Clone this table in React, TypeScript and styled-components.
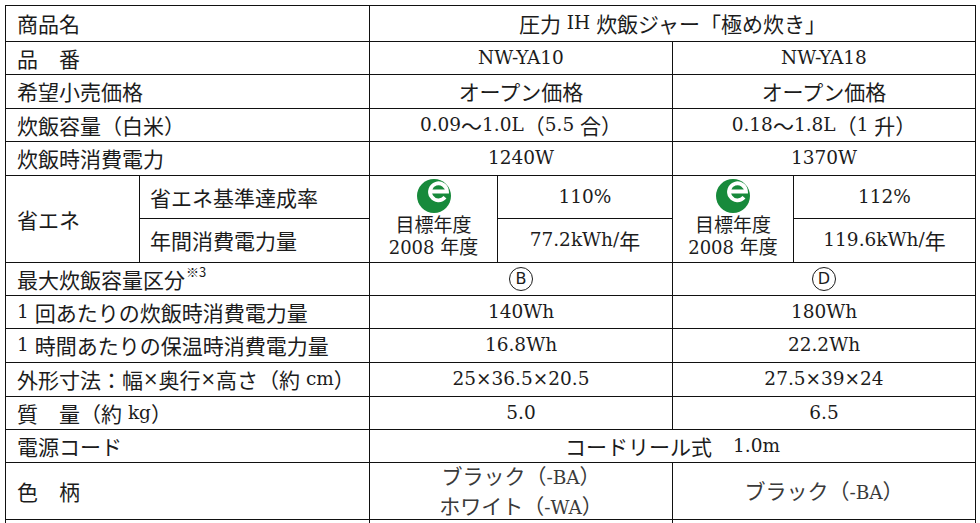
import React from "react";
import styled, { createGlobalStyle } from "styled-components";

const GlobalStyle = createGlobalStyle`
  html, body {
    margin: 0;
    padding: 0;
    background: #ffffff;
    overflow: hidden;
  }
  body {
    height: 523px;
  }
`;

// grid lines sit at x = 5,139,369,497,672,793,975
// and y = 5,41,74,108,141,175,218,262,295,328,362,396,429,462,519
const Sheet = styled.div`
  display: grid;
  grid-template-columns: 133px 229px 127px 174px 120px 181px;
  grid-template-rows: 35px 32px 33px 32px 33px 42px 43px 32px 32px 33px 33px 32px 32px 56px 30px;
  gap: 1px;
  padding: 1px;
  width: max-content;
  margin: 5px 0 0 5px;
  background: #111;
  font-family: "Noto Sans CJK JP", sans-serif;
  font-size: 21px;
  color: #1c1c1c;
`;

const Cell = styled.div<{ $col: string; $row?: string; $center?: boolean; $pad?: number }>`
  grid-column: ${(p) => p.$col};
  grid-row: ${(p) => p.$row ?? "auto"};
  background: #ffffff;
  display: flex;
  align-items: center;
  justify-content: ${(p) => (p.$center ? "center" : "flex-start")};
  padding-left: ${(p) => (p.$center ? 0 : p.$pad ?? 11)}px;
  white-space: pre;
  line-height: 1;
`;

// latin runs are set in a wide serif, like Century in the original sheet
const Latin = styled.span`
  font-family: "DejaVu Serif", "Liberation Serif", serif;
  font-size: 18.5px;
`;

const Sup = styled.span`
  font-size: 13px;
  position: relative;
  top: -8px;
  margin-left: 1px;
`;

const Circled = styled.span`
  flex: 0 0 24px;
  box-sizing: border-box;
  display: flex;
  align-items: center;
  justify-content: center;
  width: 24px;
  height: 24px;
  border: 1.5px solid #1c1c1c;
  border-radius: 50%;
  font-family: "DejaVu Sans", sans-serif;
  font-size: 16px;
  line-height: 1;
`;

const MarkCell = styled(Cell)`
  flex-direction: column;
  justify-content: flex-start;
  padding-top: 3px;
`;

const MarkText = styled.div`
  line-height: 22px;
  text-align: center;
  font-size: 19px;
  ${Latin} {
    font-size: 18px;
  }
`;

const Lines = styled.div`
  display: flex;
  flex-direction: column;
  align-items: center;
  gap: 7px;
  color: #3a3a3a;
`;

function Txt({ children }: { children: string }) {
  const parts = children.split(/( ?[A-Za-z0-9.%/×\-]+ ?)/);
  return (
    <>
      {parts.map((p, i) => (i % 2 === 1 ? <Latin key={i}>{p}</Latin> : p))}
    </>
  );
}

function EcoMark() {
  return (
    <svg width="34" height="34" viewBox="0 0 34 34">
      <circle cx="17" cy="17" r="17" fill="#178a3b" />
      <path
        d="M14.5 12.5 H30 A8.5 8.5 0 1 0 28 18.3"
        fill="none"
        stroke="#ffffff"
        strokeWidth="3.8"
      />
    </svg>
  );
}

type Row = { label: React.ReactNode; a: React.ReactNode; b: React.ReactNode; row: number };

const t = (s: string) => <Txt>{s}</Txt>;

const simpleRows: Row[] = [
  { row: 2, label: "品　番", a: t("NW-YA10"), b: t("NW-YA18") },
  { row: 3, label: "希望小売価格", a: "オープン価格", b: "オープン価格" },
  { row: 4, label: "炊飯容量（白米）", a: t("0.09～1.0L（5.5 合）"), b: t("0.18～1.8L（1 升）") },
  { row: 5, label: "炊飯時消費電力", a: t("1240W"), b: t("1370W") },
  {
    row: 8,
    label: (
      <>
        最大炊飯容量区分<Sup>※3</Sup>
      </>
    ),
    a: <Circled>B</Circled>,
    b: <Circled>D</Circled>,
  },
  { row: 9, label: t("1 回あたりの炊飯時消費電力量"), a: t("140Wh"), b: t("180Wh") },
  { row: 10, label: t("1 時間あたりの保温時消費電力量"), a: t("16.8Wh"), b: t("22.2Wh") },
  { row: 11, label: t("外形寸法：幅×奥行×高さ（約 cm）"), a: t("25×36.5×20.5"), b: t("27.5×39×24") },
  { row: 12, label: t("質　量（約 kg）"), a: t("5.0"), b: t("6.5") },
];

export default function App() {
  return (
    <>
      <GlobalStyle />
      <Sheet>
        <Cell $col="1 / 3" $row="1">商品名</Cell>
        <Cell $col="3 / 7" $row="1" $center>
          {t("圧力 IH 炊飯ジャー「極め炊き」")}
        </Cell>

        {simpleRows.map((r) => (
          <React.Fragment key={r.row}>
            <Cell $col="1 / 3" $row={String(r.row)}>{r.label}</Cell>
            <Cell $col="3 / 5" $row={String(r.row)} $center>{r.a}</Cell>
            <Cell $col="5 / 7" $row={String(r.row)} $center>{r.b}</Cell>
          </React.Fragment>
        ))}

        <Cell $col="1" $row="6 / 8">省エネ</Cell>
        <Cell $col="2" $row="6" $pad={10}>省エネ基準達成率</Cell>
        <Cell $col="2" $row="7" $pad={10}>年間消費電力量</Cell>
        <MarkCell $col="3" $row="6 / 8" $center>
          <EcoMark />
          <MarkText>
            目標年度
            <br />
            {t("2008 年度")}
          </MarkText>
        </MarkCell>
        <Cell $col="4" $row="6" $center>{t("110%")}</Cell>
        <Cell $col="4" $row="7" $center>{t("77.2kWh/年")}</Cell>
        <MarkCell $col="5" $row="6 / 8" $center>
          <EcoMark />
          <MarkText>
            目標年度
            <br />
            {t("2008 年度")}
          </MarkText>
        </MarkCell>
        <Cell $col="6" $row="6" $center>{t("112%")}</Cell>
        <Cell $col="6" $row="7" $center>{t("119.6kWh/年")}</Cell>

        <Cell $col="1 / 3" $row="13">電源コード</Cell>
        <Cell $col="3 / 7" $row="13" $center>{t("コードリール式　1.0m")}</Cell>

        <Cell $col="1 / 3" $row="14">色　柄</Cell>
        <Cell $col="3 / 5" $row="14" $center>
          <Lines>
            <span>{t("ブラック（-BA）")}</span>
            <span>{t("ホワイト（-WA）")}</span>
          </Lines>
        </Cell>
        <Cell $col="5 / 7" $row="14" $center>
          <Lines>
            <span>{t("ブラック（-BA）")}</span>
          </Lines>
        </Cell>

        <Cell $col="1 / 3" $row="15" />
        <Cell $col="3 / 5" $row="15" />
        <Cell $col="5 / 7" $row="15" />
      </Sheet>
    </>
  );
}
